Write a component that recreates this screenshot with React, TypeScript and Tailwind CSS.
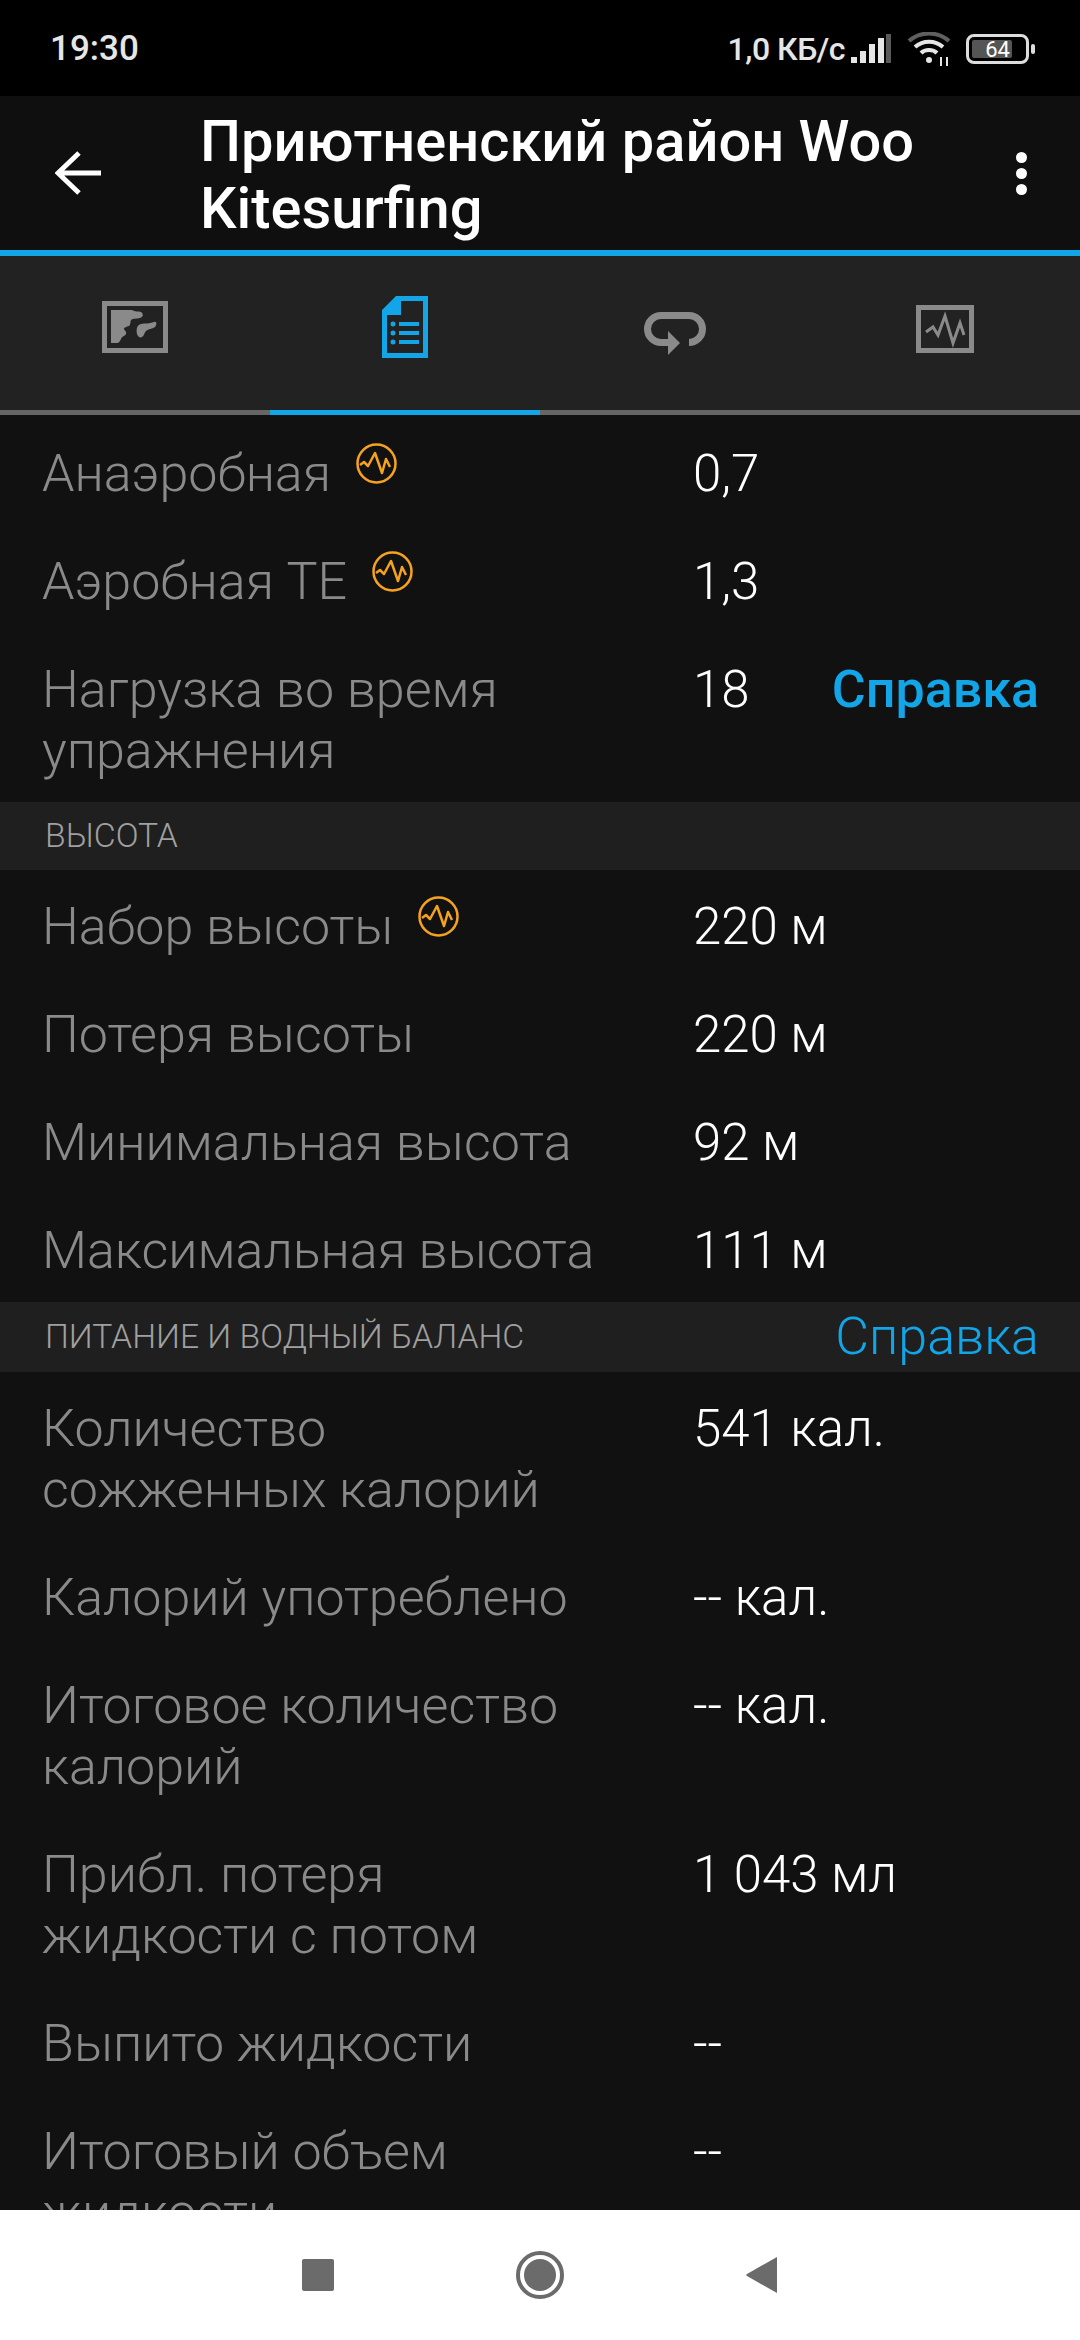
import React from 'react';

const ROBOTO = "font-['Roboto',sans-serif]";

function PulseBadge() {
  return (
    <svg className="w-[41px] h-[41px] shrink-0" viewBox="0 0 41 41" fill="none" stroke="#f5a31f">
      <circle cx="20.5" cy="20.5" r="19" strokeWidth="2.5" />
      <path d="M4 22l4-3 4 4 7-13 7 20 4-14 4 8" strokeWidth="2.5" strokeLinejoin="round" />
    </svg>
  );
}

function Row({ label, value, badge, help }: { label: React.ReactNode; value: string; badge?: boolean; help?: boolean }) {
  return (
    <div className="flex pt-[26px] pb-[21px] pl-[42px] pr-[41px] leading-[61px] font-light">
      <div className="w-[651px] shrink-0 flex items-start gap-[25px] text-[52px] text-[#8a8a8a]">
        <div>{label}</div>
        {badge && <PulseBadge />}
      </div>
      <div className="flex-1 flex justify-between text-[51px] text-white">
        <span>{value}</span>
        {help && <span className="text-[52px] text-[#12a5e8] font-medium">Справка</span>}
      </div>
    </div>
  );
}

function Section({ title, help, tall }: { title: string; help?: boolean; tall?: boolean }) {
  return (
    <div className={`${tall ? 'h-[70px]' : 'h-[68px]'} bg-[#1f1f1f] flex items-center justify-between pl-[45px] pr-[41px]`}>
      <span className="text-[33.7px] font-light text-[#a0a0a0] uppercase">{title}</span>
      {help && <span className="text-[52px] font-light text-[#12a5e8]">Справка</span>}
    </div>
  );
}

function StatusBar() {
  return (
    <div className="h-[96px] bg-black flex items-center justify-between pt-[2px] pl-[50px] pr-[45px] text-[#e6e6e6] font-medium">
      <span className="text-[35px]">19:30</span>
      <div className="flex items-center">
        <span className="text-[32px] tracking-[-0.5px]">1,0 КБ/с</span>
        <svg className="ml-[6px] w-[40px] h-[30px]" viewBox="0 0 40 30" fill="#e6e6e6">
          <rect x="0" y="23" width="6" height="6" />
          <rect x="9" y="17" width="6" height="12" />
          <rect x="18" y="10" width="6" height="19" />
          <rect x="27" y="4" width="6" height="25" />
          <rect x="35" y="0" width="5" height="29" fill="#5a5a5a" />
        </svg>
        <svg className="ml-[16px] w-[44px] h-[34px]" viewBox="0 0 44 34" fill="none" stroke="#e6e6e6" strokeWidth="4">
          <path d="M2 9C13-1 31-1 42 9" stroke="#5f5f5f" />
          <path d="M8 15c8-7 20-7 28 0" />
          <path d="M14 21c4-4 12-4 16 0" />
          <circle cx="22" cy="28" r="3" fill="#e6e6e6" stroke="none" />
          <path d="M34 34v-9M40 34v-9" strokeWidth="2" />
        </svg>
        <div className="ml-[15px] w-[63px] h-[30px] rounded-[8px] border-[3px] border-[#dddddd] p-[3px] relative flex">
          <div className="w-[40px] bg-[#555555] rounded-[2px]" />
          <span className="absolute inset-0 flex items-center justify-center text-[22px] text-white font-normal">64</span>
        </div>
        <div className="ml-[2px] w-[4px] h-[10px] rounded-full bg-[#dddddd]" />
      </div>
    </div>
  );
}

function Toolbar() {
  return (
    <div className="h-[154px] bg-[#0f0f0f] flex items-center">
      <div className="w-[200px] shrink-0 pl-[55px]">
        <svg className="w-[46px] h-[44px]" viewBox="0 0 46 44" fill="none" stroke="#fff" strokeWidth="5">
          <path d="M24 2L3 22l21 20M3 22h43" />
        </svg>
      </div>
      <div className="w-[770px] pt-[3px] text-[57.8px] leading-[67px] text-white font-medium">
        Приютненский район Woo Kitesurfing
      </div>
      <div className="flex-1 flex flex-col items-center gap-[5px] pr-[8px]">
        <div className="w-[11px] h-[11px] rounded-full bg-white" />
        <div className="w-[11px] h-[11px] rounded-full bg-white" />
        <div className="w-[11px] h-[11px] rounded-full bg-white" />
      </div>
    </div>
  );
}

function Tabs() {
  return (
    <div className="bg-[#222222]">
      <div className="h-[6px] bg-[#12a5e8]" />
      <div className="h-[154px] grid grid-cols-4 items-center">
        <div className="flex justify-center pb-[12px]">
          <svg className="w-[66px] h-[52px]" viewBox="0 0 66 52" fill="#8a8a8a">
            <path fillRule="evenodd" d="M0 0h66v52H0zM5 5v42h56V5z" />
            <path d="M9 9h21c3 2 6 1 9 2 3 2 2 5-1 6-3 1-7 0-9 2-1 2 0 4-2 6-2 1-5 1-5 3 1 2 3 3 2 5-1 2-4 2-5 5-1 2-2 4-4 4H9z" />
            <path d="M35 33c-1-5 0-9 4-10 4-1 8 0 13-2 3-1 3 3 1 5-3 2-7 2-9 4-2 2-2 5-4 6-2 1-4 0-5-3z" />
          </svg>
        </div>
        <div className="flex justify-center pb-[12px]">
          <svg className="w-[46px] h-[62px]" viewBox="0 0 46 62" fill="#12a5e8">
            <path fillRule="evenodd" d="M14 0h32v62H0V14zM19 5v14H5v38h36V5z" />
            <circle cx="11" cy="28" r="2.5" />
            <circle cx="11" cy="37" r="2.5" />
            <circle cx="11" cy="46" r="2.5" />
            <rect x="17" y="26" width="20" height="4" />
            <rect x="17" y="35" width="20" height="4" />
            <rect x="17" y="44" width="20" height="4" />
          </svg>
        </div>
        <div className="flex justify-center">
          <svg className="w-[62px] h-[43px]" viewBox="0 0 62 43" fill="none" stroke="#8a8a8a" strokeWidth="7">
            <path d="M45 30.5a13.5 13.5 0 0 0 0-27H17a13.5 13.5 0 0 0 0 27h10" />
            <path d="M24 19l12 12-12 12z" fill="#8a8a8a" stroke="none" />
          </svg>
        </div>
        <div className="flex justify-center pb-[8px]">
          <svg className="w-[58px] h-[48px]" viewBox="0 0 58 48" fill="none" stroke="#8a8a8a">
            <rect x="2.5" y="2.5" width="53" height="43" strokeWidth="5" />
            <path d="M10 27l7-5 5 8 7-19 8 27 7-20 4 12" strokeWidth="3" />
          </svg>
        </div>
      </div>
      <div className="h-[5px] bg-[#666666] flex">
        <div className="ml-[270px] w-[270px] bg-[#12a5e8]" />
      </div>
    </div>
  );
}

function NavBar() {
  return (
    <div className="h-[130px] shrink-0 bg-white flex items-center justify-center gap-[182px]">
      <div className="w-[32px] h-[32px] rounded-[2px] bg-[#6b6b6b]" />
      <div className="w-[48px] h-[48px] rounded-full border-[4px] border-[#6b6b6b] p-[4px]">
        <div className="w-full h-full rounded-full bg-[#6b6b6b]" />
      </div>
      <svg className="w-[32px] h-[36px]" viewBox="0 0 32 36" fill="#6b6b6b">
        <path d="M31 0v36L1 19c-1-1-1-1 0-2z" />
      </svg>
    </div>
  );
}

export default function App() {
  return (
    <div className={`w-[1080px] h-[2340px] flex flex-col overflow-hidden bg-[#111111] ${ROBOTO}`}>
      <StatusBar />
      <Toolbar />
      <Tabs />
      <div className="flex-1 overflow-hidden pt-[2px]">
        <Row label="Анаэробная" value="0,7" badge />
        <Row label="Аэробная TE" value="1,3" badge />
        <Row label={<>Нагрузка во время<br />упражнения</>} value="18" help />
        <Section title="Высота" />
        <Row label="Набор высоты" value="220 м" badge />
        <Row label="Потеря высоты" value="220 м" />
        <Row label="Минимальная высота" value="92 м" />
        <Row label="Максимальная высота" value="111 м" />
        <Section title="Питание и водный баланс" help tall />
        <Row label={<>Количество<br />сожженных калорий</>} value="541 кал." />
        <Row label="Калорий употреблено" value="-- кал." />
        <Row label={<>Итоговое количество<br />калорий</>} value="-- кал." />
        <Row label={<>Прибл. потеря<br />жидкости с потом</>} value="1 043 мл" />
        <Row label="Выпито жидкости" value="--" />
        <Row label={<>Итоговый объем<br />жидкости</>} value="--" />
      </div>
      <NavBar />
    </div>
  );
}
